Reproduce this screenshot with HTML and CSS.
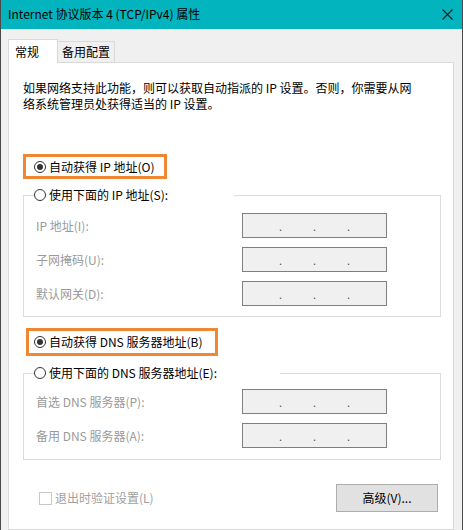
FILE: index.html
```html
<!DOCTYPE html>
<html lang="zh-CN">
<head>
    <meta charset="UTF-8">
    <meta name="viewport" content="width=device-width, initial-scale=1.0">
    <title>Internet 协议版本 4 (TCP/IPv4) 属性</title>
    <link rel="stylesheet" href="styles.css">
</head>
<body>
    <div class="window">
        <div class="titlebar">
            <span class="title">Internet 协议版本 4 (TCP/IPv4) 属性</span>
            <svg class="close" width="11" height="11" viewBox="0 0 11 11">
                <path d="M0.5 0.5 L10.5 10.5 M10.5 0.5 L0.5 10.5" stroke="#1a1a1a" stroke-width="1.1" fill="none"/>
            </svg>
        </div>

        <div class="content">
            <div class="tabs">
                <div class="tab active">常规</div>
                <div class="tab">备用配置</div>
            </div>

            <div class="panel">
                <p class="desc">如果网络支持此功能，则可以获取自动指派的 IP 设置。否则，你需要从网<br>络系统管理员处获得适当的 IP 设置。</p>

                <div class="mark mark-ip">
                    <span class="radio checked"></span>自动获得 IP 地址(O)
                </div>

                <fieldset class="group">
                    <legend class="legend-ip"><span class="radio"></span>使用下面的 IP 地址(S):</legend>
                    <div class="row">
                        <span class="label">IP 地址(I):</span>
                        <div class="ipbox"><i>.</i><i>.</i><i>.</i></div>
                    </div>
                    <div class="row">
                        <span class="label">子网掩码(U):</span>
                        <div class="ipbox"><i>.</i><i>.</i><i>.</i></div>
                    </div>
                    <div class="row">
                        <span class="label">默认网关(D):</span>
                        <div class="ipbox"><i>.</i><i>.</i><i>.</i></div>
                    </div>
                </fieldset>

                <div class="mark mark-dns">
                    <span class="radio checked"></span>自动获得 DNS 服务器地址(B)
                </div>

                <fieldset class="group group-dns">
                    <legend class="legend-dns"><span class="radio"></span>使用下面的 DNS 服务器地址(E):</legend>
                    <div class="row">
                        <span class="label">首选 DNS 服务器(P):</span>
                        <div class="ipbox"><i>.</i><i>.</i><i>.</i></div>
                    </div>
                    <div class="row">
                        <span class="label">备用 DNS 服务器(A):</span>
                        <div class="ipbox"><i>.</i><i>.</i><i>.</i></div>
                    </div>
                </fieldset>

                <div class="footer">
                    <div class="check"><span class="box"></span>退出时验证设置(L)</div>
                    <div class="button">高级(V)...</div>
                </div>
            </div>
        </div>
    </div>
</body>
</html>
```

FILE: styles.css
```css
* {
    box-sizing: border-box;
}
body {
    margin: 0;
    font-family: "Noto Sans CJK SC", "Noto Sans", sans-serif;
    font-size: 12px;
    line-height: 16px;
    color: #000;
}
.window {
    width: 463px;
    height: 530px;
    display: flex;
    flex-direction: column;
    background: #f0f0f0;
    border-left: 1px solid #4a4a4a;
    border-right: 1px solid #4a4a4a;
}
.titlebar {
    height: 29px;
    flex: none;
    display: flex;
    align-items: center;
    justify-content: space-between;
    background: #02b4be;
    padding: 0 9px 1px 7px;
}
.title {
    font-size: 12px;
}
.close {
    display: block;
}
.content {
    flex: 1;
    display: flex;
    flex-direction: column;
    padding: 10px 8px 0 7px;
}
.tabs {
    display: flex;
    align-items: flex-end;
}
.tab {
    height: 21px;
    padding: 2px 4px 0 4px;
    border: 1px solid #d9d9d9;
    border-bottom: none;
    border-left: none;
    background: #f0f0f0;
}
.tab.active {
    width: 50px;
    height: 24px;
    padding: 4px 0 0 6px;
    margin-bottom: -1px;
    border-left: 1px solid #d9d9d9;
    background: #fff;
    position: relative;
    z-index: 1;
}
.panel {
    flex: 1;
    background: #fff;
    border: 1px solid #d9d9d9;
    padding: 0 12px 0 14px;
}
.desc {
    margin: 17px 0 0 0;
}
.radio {
    width: 12px;
    height: 12px;
    flex: none;
    border: 1px solid #333;
    border-radius: 50%;
    background: #fff;
    display: inline-flex;
    align-items: center;
    justify-content: center;
    margin-right: 3px;
}
.radio.checked::after {
    content: "";
    width: 6px;
    height: 6px;
    border-radius: 50%;
    background: #333;
}
.mark {
    display: flex;
    align-items: center;
    border: 3px solid #f08733;
}
.mark-ip {
    width: 144px;
    height: 25px;
    margin-top: 42px;
    padding-left: 8px;
}
.mark-dns {
    width: 192px;
    height: 28px;
    margin: 11px 0 0 3px;
    padding-left: 5px;
}
.group {
    margin: 8px 0 0 0;
    padding: 10px 0 10px 12px;
    border: 1px solid #dcdcdc;
    display: flex;
    flex-direction: column;
    gap: 9px;
}
.group-dns {
    margin-top: 9px;
    padding-top: 8px;
    padding-bottom: 11px;
}
.group legend {
    display: flex;
    align-items: center;
    height: 16px;
    padding: 0;
    margin-left: -2px;
}
.legend-ip {
    width: 200px;
}
.legend-dns {
    width: 246px;
}
.row {
    display: flex;
    align-items: center;
    height: 25px;
}
.label {
    width: 206px;
    color: #9a9a9a;
}
.ipbox {
    width: 145px;
    height: 25px;
    border: 1px solid #7f7f7f;
    background: #f0f0f0;
    display: flex;
    justify-content: center;
    align-items: center;
    gap: 31px;
    color: #555;
    font-size: 11px;
}
.ipbox i {
    font-style: normal;
    width: 3px;
}
.footer {
    display: flex;
    align-items: center;
    justify-content: space-between;
    margin-top: 24px;
    padding: 0 3px 0 16px;
}
.check {
    display: flex;
    align-items: center;
    color: #a0a0a0;
}
.box {
    width: 13px;
    height: 13px;
    border: 1px solid #c8c8c8;
    margin-right: 3px;
}
.button {
    width: 102px;
    height: 28px;
    display: flex;
    align-items: center;
    justify-content: center;
    background: #e1e1e1;
    border: 1px solid #adadad;
}
```
